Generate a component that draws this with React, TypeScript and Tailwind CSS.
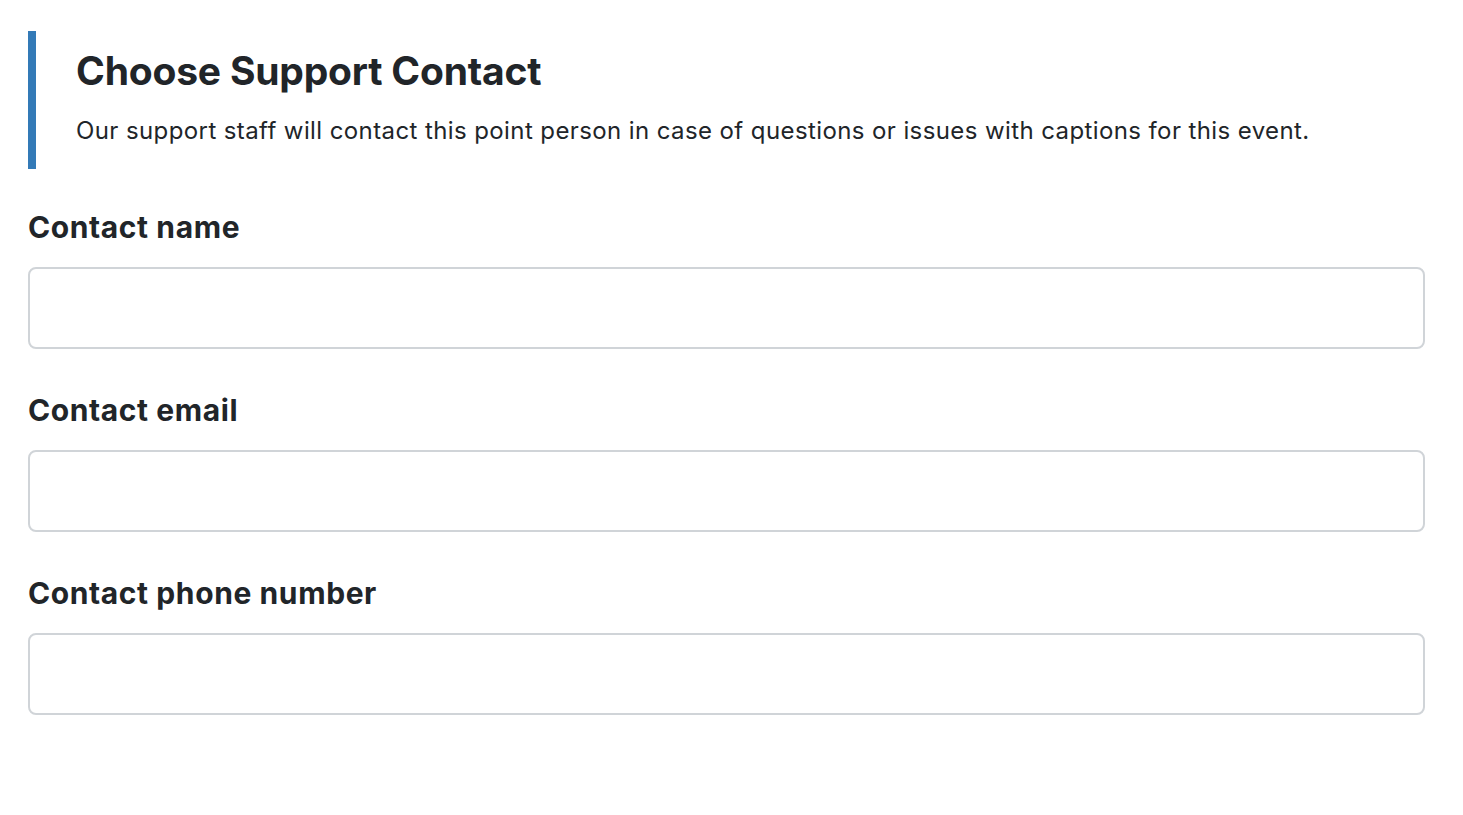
export default function App() {
	const fields = ['Contact name', 'Contact email', 'Contact phone number'];

	return (
		<div className="min-h-screen bg-white pl-7 pr-[38px] pt-[31px] text-[#212529] font-['Inter',sans-serif]">
			{/* Header */}
			<div className="border-l-8 border-[#337ab7] pl-10 pt-[17px] pb-[23px]">
				<h1 className="text-[39px] leading-[46px] font-bold tracking-[-0.2px]">Choose Support Contact</h1>
				<p className="mt-[22px] text-[24px] leading-[30px] tracking-[0.4px]">
					Our support staff will contact this point person in case of questions or issues with captions for this event.
				</p>
			</div>

			{/* Fields */}
			<div className="mt-[40px] flex flex-col gap-[43px]">
				{fields.map((label) => (
					<div key={label} className="flex flex-col">
						<label className="text-[30px] leading-[36px] font-bold tracking-[0.6px]">{label}</label>
						<input
							type="text"
							className="mt-[22px] w-full h-[82px] rounded-lg border-2 border-[#d0d4d8] bg-white px-4 text-[22px] outline-none"
						/>
					</div>
				))}
			</div>
		</div>
	);
}
